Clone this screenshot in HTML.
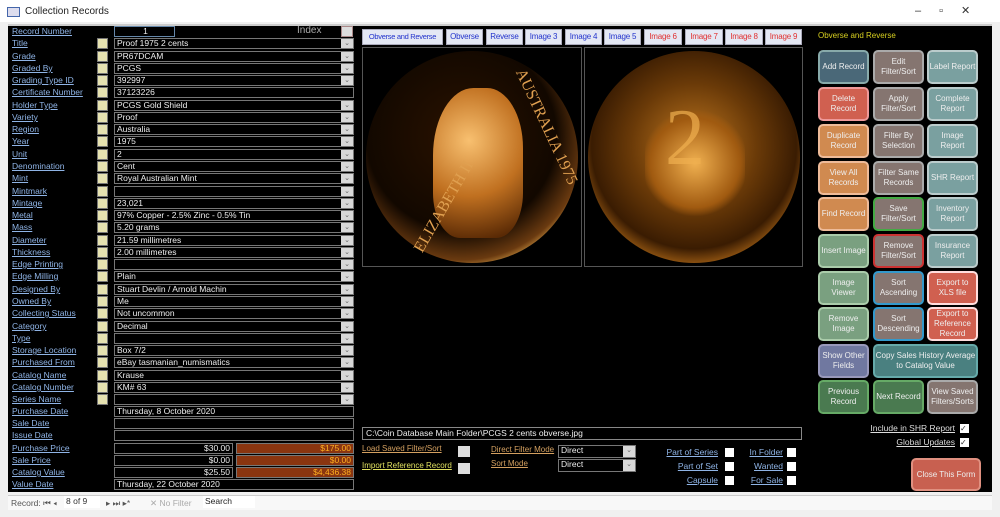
<!DOCTYPE html><html><head><style>
*{margin:0;padding:0;box-sizing:border-box}
body{width:1000px;height:517px;background:#f0f0f0;font-family:"Liberation Sans",sans-serif;font-size:8.5px;position:relative;overflow:hidden}
.a{position:absolute;white-space:nowrap}
.lb{position:absolute;left:12px;color:#8fb4e6;text-decoration:underline;font-size:8.5px;line-height:11px;white-space:nowrap}
.yb{position:absolute;left:97px;width:11px;height:11px;background:#e6e2b0;border:1px solid #777}
.f{position:absolute;left:114px;width:240px;height:11px;border:1px solid #777;background:#000;color:#eee;line-height:9px;padding-left:2px;font-size:8.5px;white-space:nowrap}
.dd{position:absolute;right:0;top:0;width:12px;height:9px;background:#d8d8d8;color:#666;font-size:7px;text-align:center;line-height:9px}
.bt{position:absolute;width:51px;height:34px;border-radius:5px;border:2px solid #ccc;color:#eee;font-size:8px;text-align:center;display:flex;align-items:center;justify-content:center;line-height:10px}
.tab{position:absolute;top:29px;height:16px;background:#e4e8f4;border:1px solid #aab;color:#2233cc;font-size:8px;line-height:14px;text-align:center;white-space:nowrap;overflow:hidden;letter-spacing:-0.2px}
.cb{position:absolute;width:9px;height:9px;background:#fff;font-size:8px;line-height:9px;color:#333}
.ul{position:absolute;color:#8fb4e6;text-decoration:underline;font-size:8.5px;white-space:nowrap;text-align:right}
</style></head><body>
<div class="a" style="left:0;top:0;width:1000px;height:22px;background:#fff"></div>
<div class="a" style="left:7px;top:7px;width:13px;height:10px;border:1px solid #4466aa;background:#dde"></div>
<div class="a" style="left:25px;top:6px;font-size:10px;color:#222">Collection Records</div>
<div class="a" style="left:915px;top:4px;color:#333;font-size:11px;letter-spacing:18px">–▫✕</div>
<div class="a" style="left:8px;top:24px;width:984px;height:468px;background:#000"></div>
<div class="a" style="left:8px;top:24px;width:984px;height:2px;background:#ccc"></div>

<div class="lb" style="top:26px">Record Number</div>
<div class="f" style="top:26px;width:61px;text-align:center;border-color:#6688aa">1</div>
<div class="a" style="left:297px;top:25px;color:#aaa;font-size:10px">Index</div>
<div class="a" style="left:341px;top:26px;width:12px;height:11px;background:#ddd;border:1px solid #a88"></div>
<div id="rows"></div>

<div class="lb" style="top:406px">Purchase Date</div><div class="f" style="top:406px">Thursday, 8 October 2020</div>
<div class="lb" style="top:418px">Sale Date</div><div class="f" style="top:418px"></div>
<div class="lb" style="top:430px">Issue Date</div><div class="f" style="top:430px"></div>
<div class="lb" style="top:443px">Purchase Price</div><div class="f" style="top:443px;width:119px;text-align:right;padding-right:2px">$30.00</div><div class="f" style="top:443px;left:236px;width:118px;background:#8a3510;color:#ffb020;text-align:right;padding-right:2px">$175.00</div>
<div class="lb" style="top:455px">Sale Price</div><div class="f" style="top:455px;width:119px;text-align:right;padding-right:2px">$0.00</div><div class="f" style="top:455px;left:236px;width:118px;background:#8a3510;color:#ffb020;text-align:right;padding-right:2px">$0.00</div>
<div class="lb" style="top:467px">Catalog Value</div><div class="f" style="top:467px;width:119px;text-align:right;padding-right:2px">$25.50</div><div class="f" style="top:467px;left:236px;width:118px;background:#8a3510;color:#ffb020;text-align:right;padding-right:2px">$4,436.38</div>
<div class="lb" style="top:479px">Value Date</div><div class="f" style="top:479px">Thursday, 22 October 2020</div>

<div class="tab" style="left:362px;width:81px;font-size:7.5px;letter-spacing:-0.3px">Obverse and Reverse</div>
<div class="tab" style="left:446px;width:37px">Obverse</div>
<div class="tab" style="left:486px;width:37px">Reverse</div>
<div class="tab" style="left:525px;width:37px">Image 3</div>
<div class="tab" style="left:565px;width:37px">Image 4</div>
<div class="tab" style="left:604px;width:37px">Image 5</div>
<div class="tab" style="left:644px;width:38px;color:#e03030">Image 6</div>
<div class="tab" style="left:685px;width:38px;color:#e03030">Image 7</div>
<div class="tab" style="left:725px;width:38px;color:#e03030">Image 8</div>
<div class="tab" style="left:765px;width:37px;color:#e03030">Image 9</div>

<div class="a" style="left:362px;top:47px;width:220px;height:220px;border:1px solid #555;overflow:hidden">
<div class="a" style="left:3px;top:3px;width:212px;height:212px;border-radius:50%;background:radial-gradient(circle at 45% 40%,#2a1200 0,#120800 55%,#6a3a10 72%,#e8b050 80%,#8a5010 88%,#f0c060 95%,#503010 100%)"></div>
<div class="a" style="left:70px;top:40px;width:90px;height:150px;border-radius:45% 40% 30% 30%;background:radial-gradient(circle at 40% 35%,#f8c070,#c07020 50%,#5a2a05 90%)"></div>
<div class="a" style="left:30px;top:150px;color:#e0a050;font-family:'Liberation Serif',serif;font-size:16px;transform:rotate(-60deg)">ELIZABETH II</div>
<div class="a" style="left:120px;top:70px;color:#e0a050;font-family:'Liberation Serif',serif;font-size:16px;transform:rotate(65deg)">AUSTRALIA 1975</div>
</div>
<div class="a" style="left:584px;top:47px;width:219px;height:220px;border:1px solid #555;overflow:hidden">
<div class="a" style="left:3px;top:3px;width:212px;height:212px;border-radius:50%;background:radial-gradient(circle at 50% 45%,#c07820 0,#6a3a08 40%,#3a1c02 65%,#8a5010 74%,#f0c060 82%,#7a4408 90%,#e8b050 96%,#402008 100%)"></div>
<div class="a" style="left:60px;top:60px;width:100px;height:110px;border-radius:40%;background:radial-gradient(circle,#f0b050,#a05a10 60%,transparent 72%)"></div>
<div class="a" style="left:80px;top:45px;color:#f0b050;font-size:80px;font-family:'Liberation Serif',serif;opacity:.7">2</div>
</div>

<div class="a" style="left:362px;top:427px;width:440px;height:13px;border:1px solid #888;color:#eee;padding-left:3px;line-height:11px">C:\Coin Database Main Folder\PCGS 2 cents obverse.jpg</div>
<div class="a" style="left:362px;top:444px;color:#d4a060;text-decoration:underline;font-size:8px">Load Saved Filter/Sort</div>
<div class="a" style="left:362px;top:461px;color:#e0e060;text-decoration:underline;font-size:8px">Import Reference Record</div>
<div class="a" style="left:458px;top:446px;width:12px;height:11px;background:#ddd"></div>
<div class="a" style="left:458px;top:463px;width:12px;height:11px;background:#ddd"></div>
<div class="a" style="left:491px;top:445px;color:#d4a060;text-decoration:underline;font-size:8px">Direct Filter Mode</div>
<div class="a" style="left:491px;top:459px;color:#d4a060;text-decoration:underline;font-size:8px">Sort Mode</div>
<div class="f" style="left:558px;top:445px;width:78px;height:13px">Direct<div class="dd" style="height:11px">⌄</div></div>
<div class="f" style="left:558px;top:459px;width:78px;height:13px">Direct<div class="dd" style="height:11px">⌄</div></div>
<div class="ul" style="right:282px;top:447px">Part of Series</div><div class="cb" style="left:725px;top:448px"></div>
<div class="ul" style="right:282px;top:461px">Part of Set</div><div class="cb" style="left:725px;top:462px"></div>
<div class="ul" style="right:282px;top:475px">Capsule</div><div class="cb" style="left:725px;top:476px"></div>
<div class="ul" style="right:217px;top:447px">In Folder</div><div class="cb" style="left:787px;top:448px"></div>
<div class="ul" style="right:217px;top:461px">Wanted</div><div class="cb" style="left:787px;top:462px"></div>
<div class="ul" style="right:217px;top:475px">For Sale</div><div class="cb" style="left:787px;top:476px"></div>

<div class="a" style="left:818px;top:31px;color:#d8d020;font-size:8px">Obverse and Reverse</div>
<div id="btns"></div>
<div class="a" style="right:45px;top:423px;color:#ddd;text-decoration:underline">Include in SHR Report</div><div class="cb" style="left:960px;top:424px">✓</div>
<div class="a" style="right:45px;top:437px;color:#ddd;text-decoration:underline">Global Updates</div><div class="cb" style="left:960px;top:438px">✓</div>
<div class="bt" style="left:911px;top:458px;width:70px;height:33px;background:#c86050;border-color:#e09080">Close This Form</div>

<div class="a" style="left:8px;top:495px;width:984px;height:15px;background:#f8f8f8;border-top:1px solid #ccc"></div>
<div class="a" style="left:11px;top:498px;color:#555">Record: ⏮ ◂</div>
<div class="a" style="left:64px;top:496px;width:36px;height:12px;background:#fff;color:#333;padding-left:2px">8 of 9</div>
<div class="a" style="left:106px;top:498px;color:#555">▸ ⏭ ▸*</div>
<div class="a" style="left:150px;top:498px;color:#aaa">✕ No Filter</div>
<div class="a" style="left:203px;top:496px;width:52px;height:12px;background:#fff;color:#222;padding-left:2px">Search</div>
<script>
var L=["Title","Grade","Graded By","Grading Type ID","Certificate Number","Holder Type","Variety","Region","Year","Unit","Denomination","Mint","Mintmark","Mintage","Metal","Mass","Diameter","Thickness","Edge Printing","Edge Milling","Designed By","Owned By","Collecting Status","Category","Type","Storage Location","Purchased From","Catalog Name","Catalog Number","Series Name"];
var V=["Proof 1975 2 cents","PR67DCAM","PCGS","392997","37123226","PCGS Gold Shield","Proof","Australia","1975","2","Cent","Royal Australian Mint","","23,021","97% Copper - 2.5% Zinc - 0.5% Tin","5.20 grams","21.59 millimetres","2.00 millimetres","","Plain","Stuart Devlin / Arnold Machin","Me","Not uncommon","Decimal","","Box 7/2","eBay tasmanian_numismatics","Krause","KM# 63","",""];
var h="";for(var i=0;i<L.length;i++){var t=Math.round(38.3+i*12.27);h+='<div class="lb" style="top:'+t+'px">'+L[i]+'</div><div class="yb" style="top:'+t+'px"></div><div class="f" style="top:'+t+'px">'+V[i]+(i==4?'':'<div class="dd">⌄</div>')+'</div>';}
document.getElementById("rows").innerHTML=h;
var B=[["Add Record","#4a6878","#8aa"],["Edit Filter/Sort","#857570","#aaa"],["Label Report","#7aa0a0","#bcc"],
["Delete Record","#d06050","#e99"],["Apply Filter/Sort","#857570","#aaa"],["Complete Report","#7aa0a0","#bcc"],
["Duplicate Record","#d08a50","#eb9"],["Filter By Selection","#857570","#aaa"],["Image Report","#7aa0a0","#bcc"],
["View All Records","#d08a50","#eb9"],["Filter Same Records","#857570","#aaa"],["SHR Report","#7aa0a0","#bcc"],
["Find Record","#d08a50","#eb9"],["Save Filter/Sort","#857570","#4a4"],["Inventory Report","#7aa0a0","#bcc"],
["Insert Image","#7aa080","#aca"],["Remove Filter/Sort","#857570","#c33"],["Insurance Report","#7aa0a0","#bcc"],
["Image Viewer","#7aa080","#aca"],["Sort Ascending","#857570","#39c"],["Export to XLS file","#d06050","#fdd"],
["Remove Image","#7aa080","#aca"],["Sort Descending","#857570","#39c"],["Export to Reference Record","#d06050","#fdd"],
["Show Other Fields","#7078a0","#99b"],["Copy Sales History Average to Catalog Value","#4a8080","#6aa"],null,
["Previous Record","#4a7a50","#6a6"],["Next Record","#4a7a50","#6a6"],["View Saved Filters/Sorts","#857570","#aaa"]];
var X=[818,873,927],Y=[50,87,124,161,197,234,271,307,344,380];h="";
for(var k=0;k<B.length;k++){if(!B[k])continue;var r=Math.floor(k/3),c=k%3,w=51;if(k==25)w=105;
h+='<div class="bt" style="left:'+X[c]+'px;top:'+Y[r]+'px;width:'+w+'px;background:'+B[k][1]+';border-color:'+B[k][2]+'">'+B[k][0]+'</div>';}
document.getElementById("btns").innerHTML=h;
</script>
</body></html>
